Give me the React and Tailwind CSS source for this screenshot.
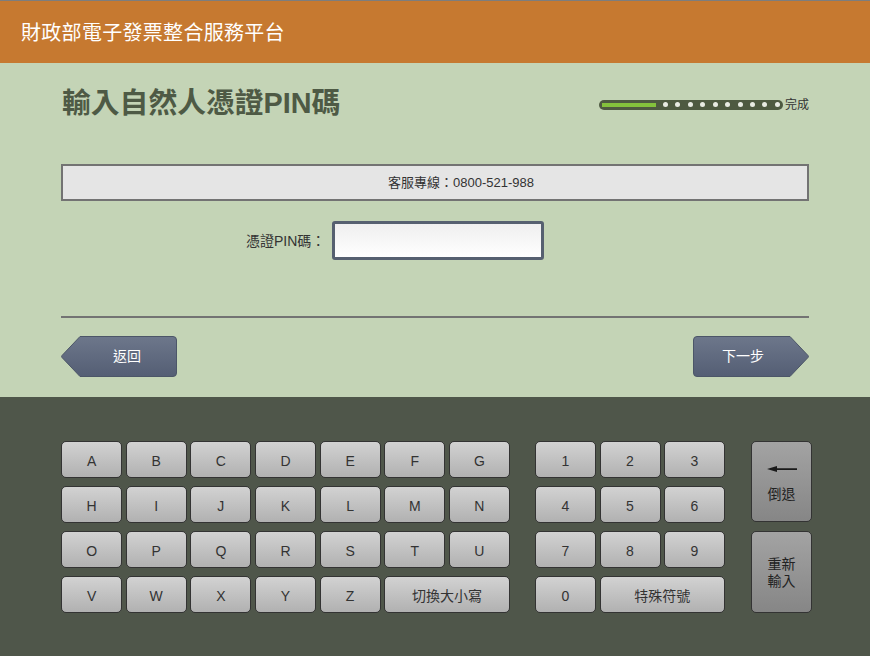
const font = "font-['Liberation_Sans','Noto_Sans_CJK_TC',sans-serif]"

const letters = ['A', 'B', 'C', 'D', 'E', 'F', 'G', 'H', 'I', 'J', 'K', 'L', 'M', 'N', 'O', 'P', 'Q', 'R', 'S', 'T', 'U', 'V', 'W', 'X', 'Y', 'Z']
const numbers = ['1', '2', '3', '4', '5', '6', '7', '8', '9', '0']
const dots = [0, 1, 2, 3, 4, 5, 6, 7, 8, 9]

function Key({ children, className = '' }) {
    return (
        <div className={`flex items-center justify-center h-[37px] pt-[2px] rounded-[5px] border border-[#333] bg-gradient-to-b from-[#d2d2d2] to-[#b1b1b1] text-sm text-[#333] ${className}`}>
            {children}
        </div>
    )
}

function SideKey({ children, className = '' }) {
    return (
        <div className={`flex flex-col items-center justify-center w-[61px] rounded-[5px] border border-[#333] bg-gradient-to-b from-[#a3a3a3] to-[#868686] text-sm leading-[17px] text-[#222] ${className}`}>
            {children}
        </div>
    )
}

export default function App() {
    return (
        <div lang="zh-TW" className={`${font} w-[870px] h-[656px] overflow-hidden flex flex-col`}>
            <header className="h-[63px] border-t border-[#7d7d7d] bg-[#c67930] flex items-center pl-[21px] pt-[2px] text-[20px] tracking-[0.3px] text-white">
                財政部電子發票整合服務平台
            </header>

            <main className="h-[334px] bg-[#c4d4b6] px-[61px]">
                <div className="flex justify-between items-start h-[101px] pt-[22px]">
                    <h1 className="ml-[1px] text-[28.8px] leading-[36px] font-bold text-[#4e5a45]">輸入自然人憑證PIN碼</h1>
                    <div className="flex items-center mt-[12px] text-xs leading-[14px] text-[#333]">
                        <div className="relative flex items-center justify-between w-[184px] h-[10px] rounded-full bg-[#4e5a41] pl-[64px] pr-[3px]">
                            <div className="absolute left-[3px] top-[3px] w-[54px] h-[4px] bg-[#84c23c]"></div>
                            {dots.map(d => (
                                <span key={d} className="w-[5px] h-[5px] rounded-full bg-[#e8ebe3]"></span>
                            ))}
                        </div>
                        <span className="ml-[2px] pt-[1px]">完成</span>
                    </div>
                </div>

                <div className="h-[37px] border-2 border-[#737373] bg-[#e5e5e5] flex items-center justify-center pl-[52px] text-[13px] text-[#333]">
                    客服專線：0800-521-988
                </div>

                <div className="flex items-center h-[39px] mt-[20px] pl-[185px] text-sm text-[#333]">
                    <span className="w-[86px]">憑證PIN碼：</span>
                    <div className="w-[212px] h-[39px] rounded-[3px] border-[3px] border-[#566070] bg-gradient-to-b from-[#efefef] to-white"></div>
                </div>

                <div className="mt-[56px] border-t-2 border-[#737373]"></div>

                <div className="flex justify-between mt-[18px]">
                    <div className="relative w-[116px] h-[41px]">
                        <svg className="absolute inset-0" width="116" height="41" viewBox="0 0 116 41">
                            <defs>
                                <linearGradient id="backFill" x1="0" y1="0" x2="0" y2="1">
                                    <stop offset="0" stopColor="#6d778b" />
                                    <stop offset="1" stopColor="#545e74" />
                                </linearGradient>
                            </defs>
                            <path d="M19 .5H112a3.5 3.5 0 0 1 3.5 3.5V37a3.5 3.5 0 0 1-3.5 3.5H19L1 21.5a1.5 1.5 0 0 1 0-2Z" fill="url(#backFill)" stroke="#4c5668" />
                        </svg>
                        <span className="absolute left-[52px] top-[11px] text-sm leading-[18px] text-white">返回</span>
                    </div>
                    <div className="relative w-[116px] h-[41px]">
                        <svg className="absolute inset-0" width="116" height="41" viewBox="0 0 116 41">
                            <defs>
                                <linearGradient id="nextFill" x1="0" y1="0" x2="0" y2="1">
                                    <stop offset="0" stopColor="#6d778b" />
                                    <stop offset="1" stopColor="#545e74" />
                                </linearGradient>
                            </defs>
                            <path d="M97 .5H4A3.5 3.5 0 0 0 .5 4V37A3.5 3.5 0 0 0 4 40.5H97L115 21.5a1.5 1.5 0 0 0 0-2Z" fill="url(#nextFill)" stroke="#4c5668" />
                        </svg>
                        <span className="absolute left-[29px] top-[11px] text-sm leading-[18px] text-white">下一步</span>
                    </div>
                </div>
            </main>

            <section className="flex-1 bg-[#4f564a] flex pt-[44px] pl-[61px]">
                <div className="w-[449px] grid grid-cols-7 gap-x-[3.5px] gap-y-[8px] content-start">
                    {letters.map(l => <Key key={l}>{l}</Key>)}
                    <Key className="col-span-2">切換大小寫</Key>
                </div>

                <div className="w-[190px] ml-[25px] grid grid-cols-3 gap-x-[3.5px] gap-y-[8px] content-start">
                    {numbers.map(n => <Key key={n}>{n}</Key>)}
                    <Key className="col-span-2">特殊符號</Key>
                </div>

                <div className="ml-[26px] flex flex-col gap-[9px]">
                    <SideKey className="h-[81px] pt-[4px]">
                        <svg className="mb-[13px]" width="30" height="8" viewBox="0 0 30 8">
                            <path d="M0 4 10 1V3.2H30V5H10V7Z" fill="#1a1a1a" />
                        </svg>
                        倒退
                    </SideKey>
                    <SideKey className="h-[82px] pt-[2px]">
                        <span>重新</span>
                        <span>輸入</span>
                    </SideKey>
                </div>
            </section>
        </div>
    )
}
